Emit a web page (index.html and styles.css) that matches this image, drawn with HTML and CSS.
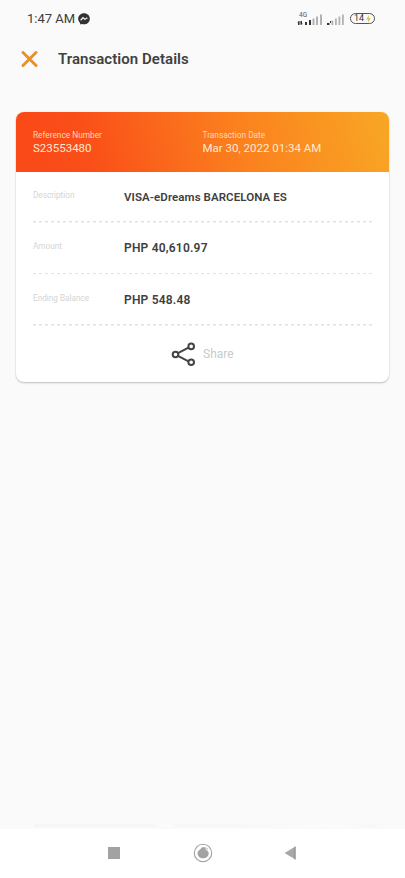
FILE: index.html
```html
<!DOCTYPE html>
<html lang="en">
<head>
<meta charset="utf-8">
<title>Transaction Details</title>
<link rel="stylesheet" href="styles.css">
</head>
<body>
<div class="screen">
  <header class="status">
    <span class="clock">1:47 AM</span>
    <svg class="messenger" width="12" height="12" viewBox="0 0 12 12"><path d="M6 .2C2.700 .2.200 2.600.200 5.800c0 1.700.700 3.100 1.900 4.100v1.700l1.700-.6c.7.200 1.400.3 2.200.3 3.300 0 5.800-2.400 5.800-5.600S9.300.2 6 .2z" fill="#333"/><path d="M2.600 7.300 5 4.700l2 1.500 2.400-1.500" fill="none" stroke="#eee" stroke-width="1.300"/></svg>
    <svg class="signals" width="50" height="18" viewBox="0 0 50 18">
      <text x="2" y="6.500" class="network">4G</text>
      <path d="M1 12h1.500v3H1zM3.500 11H5v3H3.500zM8 12h2v3H8zM12 10h2v5h-2zM30 13h2.500v2H30zM33 11h1v2h-1z" fill="#333"/>
      <path d="M.5 12.500 2 11l1.500 1.500M3 13.500 4.300 15l1.200-1.500" fill="none" stroke="#444" stroke-width=".7"/>
      <path d="M15.500 8.500h2V15h-2zM19 6.500h2V15h-2zM23 4.500h2V15h-2zM34.500 10.500h1.800V15h-1.800zM38 8.500h1.800V15H38zM41.500 6.500h1.800V15h-1.800zM45 4.500h1.800V15H45z" fill="#b2b2b2"/>
    </svg>
    <div class="battery"><span>14</span><svg width="5" height="8" viewBox="0 0 5 8"><path d="M3 0 .3 4.500h2L1.700 8 4.700 3.300H2.600z" fill="#cfc04a"/></svg></div>
  </header>
  <div class="title-bar">
    <svg width="17" height="17" viewBox="0 0 17 17"><path d="m2 1.500 13 13M15 1.500l-13 13" fill="none" stroke="#e8902a" stroke-width="2.900" stroke-linecap="round"/></svg>
    <h1>Transaction Details</h1>
  </div>
  <main class="card">
    <section class="summary">
      <div><div class="caption ref-caption">Reference Number</div><div class="value ref-value">S23553480</div></div>
      <div><div class="caption date-caption">Transaction Date</div><div class="value">Mar 30, 2022 01:34 AM</div></div>
    </section>
    <section class="rows">
      <div class="row"><span class="label">Description</span><strong class="merchant">VISA-eDreams BARCELONA ES</strong></div>
      <div class="row"><span class="label">Amount</span><strong>PHP 40,610.97</strong></div>
      <div class="row"><span class="label">Ending Balance</span><strong>PHP 548.48</strong></div>
    </section>
    <div class="share">
      <svg width="25" height="25" viewBox="0 0 25 25" fill="none" stroke="#444" stroke-width="2"><path d="m7 11.200 10.500-5.500M7 13.800l10.500 5.500"/><circle cx="4.500" cy="12.500" r="2.800"/><circle cx="20.200" cy="4.400" r="2.800"/><circle cx="20.200" cy="20.200" r="2.800"/></svg>
      <span>Share</span>
    </div>
  </main>
  <div class="bottom-edge"></div>
  <nav class="nav">
    <svg width="20" height="20" viewBox="0 0 20 20"><path d="M4 4h12v12H4z" fill="#a2a2a2"/></svg>
    <svg width="20" height="20" viewBox="0 0 20 20"><circle cx="10" cy="10" r="8.700" fill="#fff" stroke="#a2a2a2" stroke-width="1.100"/><path d="M9 4.200c-.8 1.600-3.800 3.300-4.400 5.200-.6 3 2.200 5.900 5.400 5.900s6-2.500 5.700-5.400c-.2-1.600-1.400-1.400-2-2.800-.3-1-.5-2.200-1.400-2.800z" fill="#a2a2a2"/><circle cx="13.700" cy="6.200" r="1.400" fill="#d4d4d4"/></svg>
    <svg width="20" height="20" viewBox="0 0 20 20"><path d="M14.500 3.500v13L3.500 10z" fill="#a8a8a8"/><path d="M14 3.500v13" stroke="#8c8c8c"/></svg>
  </nav>
</div>
</body>
</html>
```

FILE: styles.css
```css
* { box-sizing: border-box; }
body { margin: 0; background: #fafafa; font-family: Roboto, sans-serif; color: #404040; }
.screen { width: 405px; height: 878px; display: flex; flex-direction: column; overflow: hidden; }
.status { height: 36px; padding: 1px 30px 0 27px; display: flex; align-items: center; }
.clock { width: 48px; font-size: 13px; line-height: 16px; color: #3c3c3c; white-space: nowrap; }
.messenger { margin-left: 3px; }
.signals { margin-left: auto; }
.network { font-size: 6.500px; fill: #555; }
.battery { width: 25px; height: 11px; margin-left: 3px; border: 1.500px solid #555; border-radius: 6px; display: flex; align-items: center; justify-content: center; gap: 2px; font-size: 9px; line-height: 9px; color: #333; }
.title-bar { height: 46px; padding-left: 21px; display: flex; align-items: center; gap: 20px; }
.title-bar h1 { margin: 0; font-size: 15px; line-height: 20px; font-weight: 600; letter-spacing: .05px; color: #414141; }
.card { width: 373px; height: 270px; margin: 30px 16px 0; border-radius: 8px; background: #fff; overflow: hidden; box-shadow: 0 1px 2px rgba(0, 0, 0, .25); }
.summary { height: 60px; padding: 17px 17px 0; display: grid; grid-template-columns: 169.500px 1fr; background: linear-gradient(75deg, #fa4a18 8%, #fa4f19 20%, #fb811e 60%, #f8a724 100%); color: #ffe9d5; }
.caption { font-size: 8.300px; line-height: 12px; color: #ffd5b5; white-space: nowrap; }
.value { font-size: 11.500px; line-height: 14px; white-space: nowrap; }
.rows { padding: 0 17px; }
.row { height: 51.700px; display: grid; grid-template-columns: 91px 1fr; align-items: center; padding-bottom: 1px; background: repeating-linear-gradient(90deg, #e2e2e2 0 3px, transparent 3px 6px) bottom / 100% 1.500px no-repeat; }
.row:first-child { height: 50.500px; }
.label { font-size: 8.200px; line-height: 10px; padding-bottom: 3px; color: #d4d4d4; white-space: nowrap; }
.row strong { font-size: 12px; line-height: 16px; font-weight: 600; letter-spacing: .2px; color: #404040; }
.row .merchant { font-size: 11.500px; letter-spacing: .08px; }
.share { height: 56px; padding: 1px 0 0 155px; display: flex; align-items: center; gap: 7px; font-size: 12px; color: #cacaca; }
.bottom-edge { height: 3px; margin: auto 28px 2px 34px; background: linear-gradient(90deg, #f6f6f6 0 35%, #fcfcfc 37% 39%, #f7f7f7 42% 60%, #fcfcfc 85%, #f7f7f7); }
.nav { height: 49px; padding: 0 0 1px 104px; background: #fff; display: flex; align-items: center; gap: 68.500px; }
```
